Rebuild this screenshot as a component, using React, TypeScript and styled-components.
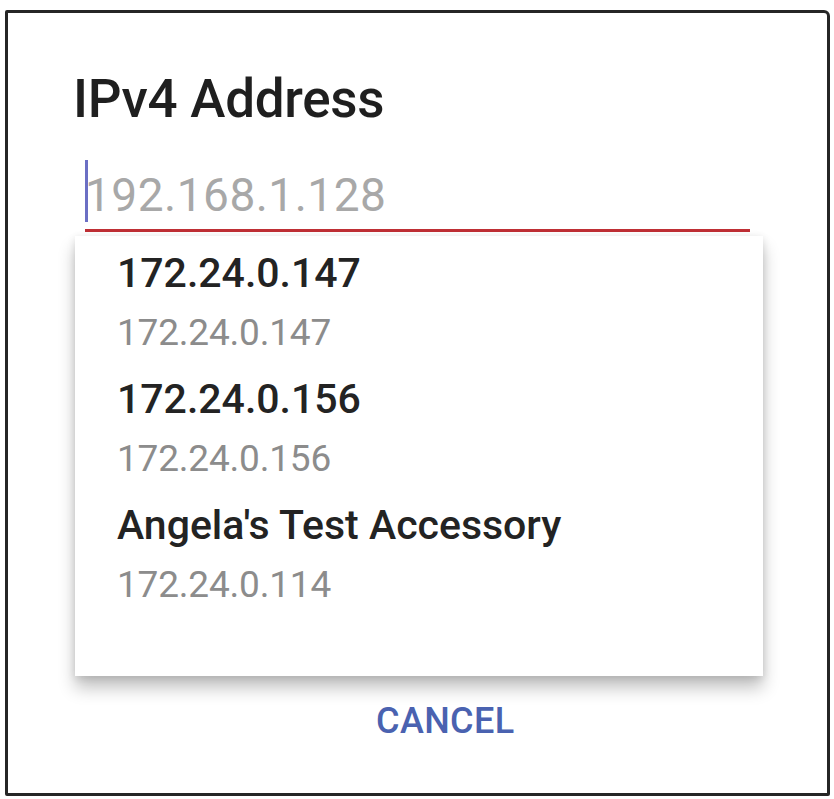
import React from 'react';
import styled, { createGlobalStyle } from 'styled-components';

const GlobalStyle = createGlobalStyle`
  html, body {
    margin: 0;
    padding: 0;
    background: #ffffff;
  }
  body {
    font-family: Roboto, "Liberation Sans", Arial, sans-serif;
  }
`;

const Frame = styled.div`
  box-sizing: border-box;
  height: 786px;
  margin: 10px 4px 3px 5px;
  border: 3px solid #262626;
  border-radius: 2px 6px 2px 2px;
  background: #fff;
  display: flex;
  flex-direction: column;
`;

const Title = styled.h2`
  margin: 60px 0 0 65px;
  font-size: 53px;
  line-height: 1;
  font-weight: 500;
  color: #1f1f1f;
  letter-spacing: -0.3px;
`;

const Field = styled.div`
  position: relative;
  margin: 34px 0 0 77px;
  width: 665px;
`;

const InputRow = styled.div`
  display: flex;
  align-items: flex-start;
  padding-bottom: 7px;
  border-bottom: 3px solid #bf2f35;
`;

const Caret = styled.span`
  display: block;
  width: 3px;
  height: 62px;
  background: #6b6fc4;
`;

const Placeholder = styled.span`
  margin: 12px 0 0 -3px;
  font-size: 46px;
  line-height: 1;
  color: #a8a8a8;
  letter-spacing: 0.5px;
`;

const Menu = styled.ul`
  position: absolute;
  top: calc(100% + 4px);
  left: -10px;
  box-sizing: border-box;
  width: 688px;
  height: 440px;
  margin: 0;
  padding: 7px 0 0 42px;
  list-style: none;
  background: #fff;
  box-shadow: 0 12px 16px rgba(0, 0, 0, 0.24), 0 2px 8px rgba(0, 0, 0, 0.12);
`;

const Item = styled.li`
  display: flex;
  flex-direction: column;
  padding-bottom: 6px;
`;

const Primary = styled.span`
  font-size: 41px;
  line-height: 60px;
  font-weight: 500;
  color: #232323;
  letter-spacing: 0;
`;

const Secondary = styled.span`
  font-size: 37px;
  line-height: 60px;
  color: #8c8c8c;
  letter-spacing: -0.2px;
`;

const Spacer = styled.div`
  flex: 1;
`;

const Footer = styled.div`
  display: flex;
  padding: 0 0 54px 368px;
`;

const TextButton = styled.button`
  border: none;
  background: none;
  padding: 0;
  font-family: inherit;
  font-size: 36px;
  line-height: 1;
  font-weight: 500;
  color: #4a62b0;
  letter-spacing: 0.4px;
`;

const suggestions = [
  { name: '172.24.0.147', address: '172.24.0.147' },
  { name: '172.24.0.156', address: '172.24.0.156' },
  { name: "Angela's Test Accessory", address: '172.24.0.114' },
];

const App: React.FC = () => {
  return (
    <>
      <GlobalStyle />
      <Frame>
        <Title>IPv4 Address</Title>
        <Field>
          <InputRow>
            <Caret />
            <Placeholder>192.168.1.128</Placeholder>
          </InputRow>
          <Menu>
            {suggestions.map((s, i) => (
              <Item key={i}>
                <Primary>{s.name}</Primary>
                <Secondary>{s.address}</Secondary>
              </Item>
            ))}
          </Menu>
        </Field>
        <Spacer />
        <Footer>
          <TextButton>CANCEL</TextButton>
        </Footer>
      </Frame>
    </>
  );
};

export default App;
